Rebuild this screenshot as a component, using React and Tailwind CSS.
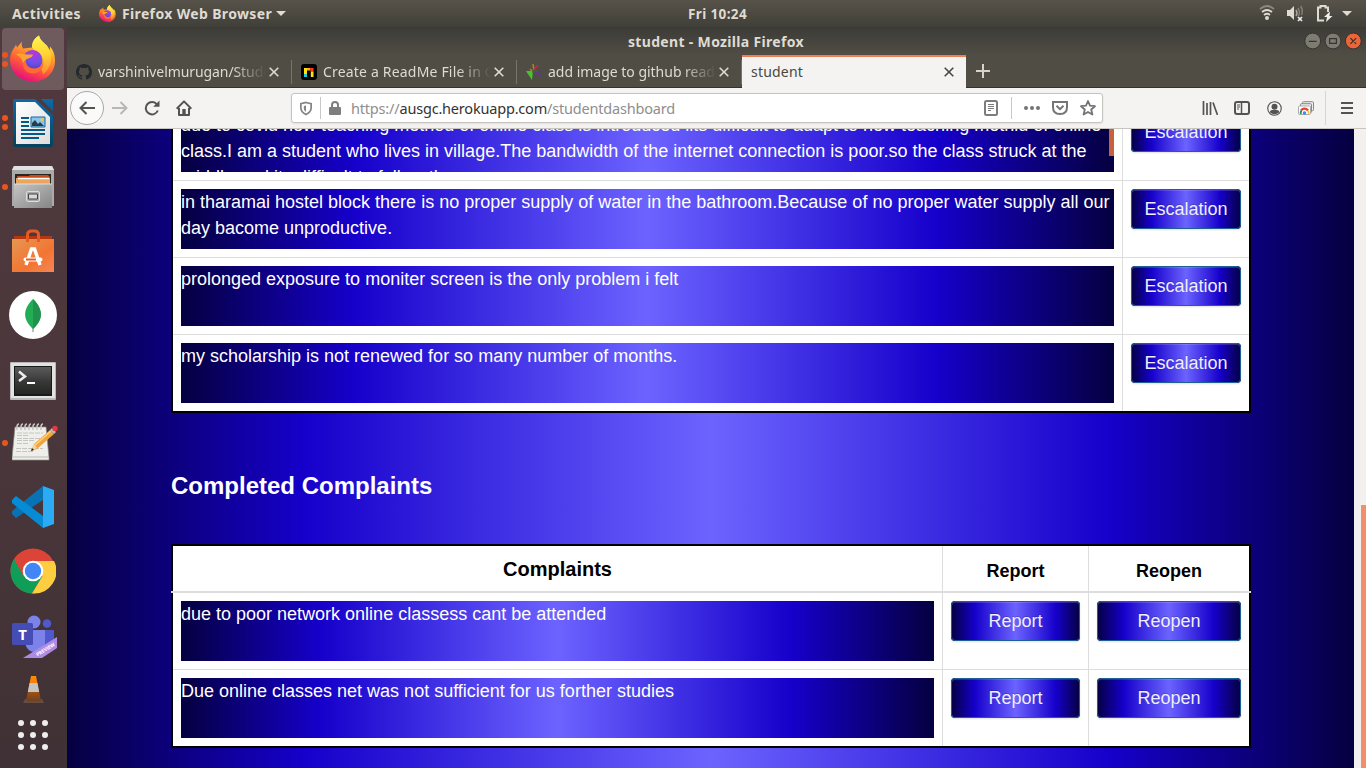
import React from "react";

const GRAD = "bg-[linear-gradient(90deg,#050040_0%,#1600cb_18.5%,#6c63ff_50%,#1600cb_81%,#050040_100%)]";
const UI = "font-['Noto_Sans','Open_Sans',sans-serif]";

/* One line of interface text fitted to a fixed advance width. */
function Label({ text, width, size = 14, bold = false, className = "", children }) {
  const ref = React.useRef(null);
  const [gap, setGap] = React.useState(0);
  React.useLayoutEffect(() => {
    const w = ref.current.getBoundingClientRect().width;
    const n = ref.current.textContent.length;
    setGap((width - w) / n);
  }, [width]);
  return (
    <span
      ref={ref}
      className={`inline-block whitespace-nowrap ${UI} ${bold ? "font-bold" : ""} ${className}`}
      style={{ fontSize: size, letterSpacing: gap }}
    >
      {children || text}
    </span>
  );
}

function FirefoxIcon({ className, id }) {
  return (
    <svg viewBox="0 0 46 46" className={className}>
      <defs>
        <linearGradient id={id + "a"} x1="0.8" y1="0.1" x2="0.4" y2="1">
          <stop offset="0" stopColor="#fff44f" /><stop offset="0.3" stopColor="#ffa62b" />
          <stop offset="0.65" stopColor="#ff5a3a" /><stop offset="1" stopColor="#e80f7c" />
        </linearGradient>
        <radialGradient id={id + "b"} cx="0.6" cy="0.15" r="0.9">
          <stop offset="0" stopColor="#b834e0" /><stop offset="0.55" stopColor="#7050e8" /><stop offset="1" stopColor="#4a3dbd" />
        </radialGradient>
        <linearGradient id={id + "c"} x1="0.5" y1="0" x2="0.6" y2="1">
          <stop offset="0" stopColor="#fff44f" /><stop offset="0.5" stopColor="#ffd433" /><stop offset="1" stopColor="#ff8a33" />
        </linearGradient>
      </defs>
      <path d="M29 0c1 5 5 7 8 10l3 5 0-4c4 5 5 9 5 14 0 13-10 21-22 21S0 37 0 24c0-5 2-9 5-13l1-2 1 3 5-6c-1 3 0 5 1 7l9-1c0-5 2-9 7-12z" fill={`url(#${id}a)`} />
      <path d="M29 0c1 5 5 7 9 12 6 9 3 21-5 27l-6-22-5-5c0-5 2-9 7-12z" fill={`url(#${id}c)`} />
      <circle cx="22.500" cy="24.500" r="10" fill={`url(#${id}b)`} />
      <path d="M6 19c4-2 8 0 11 0h6c-1 4-4 3-7 5l-3 4c-1-5-3-7-7-9z" fill="#ffa22c" />
      <path d="M13 28l3-4c-1 5 3 9 8 9 6 0 9-4 9-9 2 7-3 14-10 14-6 0-10-4-10-10z" fill="#ff6a33" />
    </svg>
  );
}

function DockItem({ dots = 0, height, active, children }) {
  return (
    <div className="flex w-[67px] shrink-0 items-center" style={{ height }}>
      <div className="z-10 -mr-[3px] flex w-[2px] shrink-0 flex-col items-center justify-center gap-[3px] pl-[5px]">
        {Array.from({ length: dots }, (_, i) => <span key={i} className="size-[6px] shrink-0 rounded-full bg-[#e95420]" />)}
      </div>
      <div className={`flex h-full w-[62px] items-center justify-center rounded-[4px] ${active ? "bg-[#6f5b5e]" : ""}`}>{children}</div>
    </div>
  );
}

function Dock() {
  return (
    <nav className="flex w-[67px] shrink-0 flex-col bg-[linear-gradient(180deg,#50393e_0%,#4b373b_50%,#3f3135_100%)] pt-[1px]">
      <DockItem dots={2} height={62} active><FirefoxIcon id="dock" className="mb-[2px] h-[47px] w-[46px]" /></DockItem>
      <DockItem dots={2} height={65}>
        <svg viewBox="0 0 40 48" className="h-12 w-10">
          <defs><linearGradient id="lw" x2="0" y2="1"><stop stopColor="#0d6aa8" /><stop offset="1" stopColor="#04425f" /></linearGradient><linearGradient id="paper" x2="1" y2="1"><stop stopColor="#fff" /><stop offset="1" stopColor="#ddd" /></linearGradient></defs>
          <path d="M2 0h20l18 16v30q0 2-2 2H2q-2 0-2-2V2q0-2 2-2zM28 0h12v12z" fill="url(#lw)" />
          <path d="M3 3h19l15 15v27H3z" fill="url(#paper)" />
          <path d="M8 19h8M8 23h8M8 27h8M8 31h24M8 35h24M8 39h18" stroke="#075985" strokeWidth="2" />
          <path d="M18 18h14v10H18z" fill="#8bc5ee" stroke="#12699e" /><circle cx="29" cy="20.500" r="1.500" fill="#fac443" /><path d="M19 27v-3l3-3 3 4 2-2 4 4z" fill="#263d45" />
        </svg>
      </DockItem>
      <DockItem dots={1} height={64}>
        <svg viewBox="0 0 42 44" className="h-11 w-[42px]">
          <defs><linearGradient id="cab" x2="1" y2="1"><stop stopColor="#c5c5c5" /><stop offset="1" stopColor="#858585" /></linearGradient></defs>
          <path d="M2 1h38l2 4v36H0V5z" fill="#aaa" /><path d="M2 1h38l2 4H0z" fill="#e1e1e1" />
          <path d="M3 9h36v12H3z" fill="#292522" /><path d="M5 11h12l1-1h18l2 2v8H5z" fill="#c84b18" /><path d="M4 13h34v6H4z" fill="#eca55d" /><path d="M6 13.500h31" stroke="#fff" strokeWidth="1.500" />
          <path d="M2 19h38v24H2z" fill="url(#cab)" /><path d="M2 19h38" stroke="#ddd" />
          <rect x="14.500" y="26.500" width="13" height="10" rx="1.500" fill="#aaa" stroke="#ddd" /><path d="M16.500 29h9v5h-9z" fill="#d8d8d8" stroke="#444" />
        </svg>
      </DockItem>
      <DockItem height={64}>
        <svg viewBox="0 0 42 44" className="h-11 w-[42px]">
          <defs><linearGradient id="bag" x2="1" y2="1"><stop stopColor="#e69752" /><stop offset=".6" stopColor="#f27532" /><stop offset="1" stopColor="#f58656" /></linearGradient></defs>
          <path d="M2 7h38v5H2z" fill="#b5370f" /><path d="M0 10h42v33H0z" fill="url(#bag)" />
          <path d="M15.500 13V6q0-4 4-4h3q4 0 4 4v7" fill="none" stroke="#e45b24" strokeWidth="3" />
          <path d="M14 36l5.500-16h3L28 36" fill="none" stroke="#fff" strokeWidth="3.500" /><path d="M13.500 30.500h15" stroke="#fff" strokeWidth="4" strokeLinecap="round" /><path d="M14 30.500h10" stroke="#f15a22" strokeWidth="2" />
        </svg>
      </DockItem>
      <DockItem height={64}>
        <svg viewBox="0 0 48 48" className="size-12"><circle cx="24" cy="24" r="24" fill="#fff" /><path d="M24 36v5" stroke="#999" strokeWidth="1.300" /><path d="M24 8c11 11 10 21 0 30-10-9-11-19 0-30z" fill="#20ad56" /><path d="M24 8c11 11 10 21 0 30z" fill="#22914e" /></svg>
      </DockItem>
      <DockItem height={67}>
        <svg viewBox="0 0 46 38" className="h-[38px] w-[46px]">
          <defs><linearGradient id="term" x2="0" y2="1"><stop stopColor="#5a5a5a" /><stop offset=".55" stopColor="#363836" /><stop offset="1" stopColor="#242624" /></linearGradient></defs>
          <rect width="46" height="38" rx="1" fill="#b8b8b8" /><path d="M1 1h44v35H1z" fill="#e2e2e2" /><path d="M4 4h38v30H4z" fill="#171a19" /><path d="M5 5h36v27H5z" fill="url(#term)" />
          <path d="M9 9.500l6 5-6 4.500" stroke="#eee" strokeWidth="2.500" fill="none" /><path d="M17 21h8" stroke="#fff" strokeWidth="2" />
        </svg>
      </DockItem>
      <DockItem dots={1} height={57}>
        <svg viewBox="0 0 46 38" className="mb-[2px] ml-[3px] h-[38px] w-[46px]">
          <path d="M3 4h31l3 31v2H0v-2z" fill="#eeeeeb" stroke="#8f8f88" strokeWidth=".7" /><path d="M1 34h35" stroke="#b9bbaf" />
          <path d="M5 7V4q0-3 2-3M9 7V4q0-3 2-3M13 7V4q0-3 2-3M17 7V4q0-3 2-3M21 7V4q0-3 2-3M25 7V4q0-3 2-3M29 7V4q0-3 2-3" stroke="#c5c5c5" strokeWidth="1.500" fill="none" />
          <path d="M5 10h26M5 12.500h12M5 15.500h23M5 17.500h17M5 20.500h11M4 25.500h27M4 28.500h17" stroke="#c0c0bc" strokeWidth=".9" strokeDasharray="5 1" />
          <path d="M19 28l3-7L38 7l4 4-17 15z" fill="#f2a43c" /><path d="M22 23L39 8" stroke="#ffd27c" strokeWidth="1.500" /><path d="M19 28l3-7 3 4z" fill="#efd3a4" /><path d="M19 28l1-3 2 2z" fill="#222" /><path d="M38 7l2-2 4 4-2 2z" fill="#bbb" /><circle cx="43" cy="5.500" r="2.700" fill="#e3393e" />
        </svg>
      </DockItem>
      <DockItem height={72}>
        <svg viewBox="0 0 42 42" className="mb-[1px] size-[42px]"><path d="M31 0v14L4 32l-4-4v-3z" fill="#0872b5" /><path d="M0 14l4-4 27 20v12L0 17z" fill="#078bd5" /><path d="M31 0l11 4v34l-11 4z" fill="#2caaf4" /></svg>
      </DockItem>
      <DockItem height={57}>
        <svg viewBox="0 0 46 46" className="mb-[1px] size-[46px]">
          <circle cx="23" cy="23" r="22.500" fill="#db4437" /><path d="M4 11a22.500 22.500 0 0 0 18 34.500L32.500 28 13.500 28z" fill="#0f9d58" /><path d="M23 13h21a22.500 22.500 0 0 1-22 32.500L32.500 28z" fill="#ffcd40" /><circle cx="23" cy="23" r="10.300" fill="#fff" /><circle cx="23" cy="23" r="8.200" fill="#4285f4" />
        </svg>
      </DockItem>
      <DockItem height={74}>
        <svg viewBox="0 0 46 44" className="ml-[2px] h-11 w-[46px]">
          <circle cx="23" cy="7" r="6.500" fill="#7b83eb" /><circle cx="36" cy="8.500" r="4.300" fill="#5059c9" /><path d="M31 15h12v13q-3 6-8 6z" fill="#5059c9" /><path d="M15 15h19v14q-2 8-10 8T14 28z" fill="#7b83eb" />
          <rect x="1" y="8" width="21" height="22" rx="1.500" fill="#454db5" /><text x="11.500" y="24.500" textAnchor="middle" fontSize="15" fontWeight="700" fill="#fff" fontFamily="Open Sans, sans-serif">T</text>
          <path d="M12 43l34-21v11L31 43z" fill="#ad8be5" /><text transform="translate(26.500 41.500) rotate(-32)" fontSize="5" fontWeight="700" fill="#fff" fontFamily="Open Sans, sans-serif" textLength="21">PREVIEW</text>
        </svg>
      </DockItem>
      <DockItem height={31}>
        <svg viewBox="0 0 21 28" className="h-7 w-[21px]"><defs><linearGradient id="cone" x2="0" y2="1"><stop stopColor="#ff8a00" /><stop offset=".4" stopColor="#f07a10" /><stop offset=".6" stopColor="#a55312" /><stop offset="1" stopColor="#6e4020" /></linearGradient></defs><path d="M2 23h17l2 4H0z" fill="#664d43" /><path d="M8 0h5l5 25H3z" fill="url(#cone)" /><path d="M6.600 7h7.800l1.800 9H4.800z" fill="#c4c4c2" /></svg>
      </DockItem>
      <DockItem height={60}>
        <svg viewBox="0 0 30 30" className="size-[30px]" fill="#eee">{[3, 15, 27].map((y) => [3, 15, 27].map((x) => <circle key={x + "-" + y} cx={x} cy={y} r="3" />))}</svg>
      </DockItem>
    </nav>
  );
}

function Close({ className = "" }) {
  return <svg viewBox="0 0 10 10" className={`size-[10px] shrink-0 ${className}`} fill="none" stroke="currentColor" strokeWidth="1.600"><path d="M.7.7l8.600 8.600M9.300.7L.7 9.300" /></svg>;
}

function Tab({ icon, text, width, left }) {
  return (
    <div className="flex h-[33px] w-[225px] shrink-0 items-center pl-[9px] text-[#dedbd2]">
      {icon}
      <div className="flex w-[168px] items-center overflow-hidden [mask-image:linear-gradient(90deg,#000_80%,transparent_100%)]" style={{ marginLeft: left }}>
        <Label text={text} width={width} />
      </div>
      <Close className="ml-auto mr-[12px]" />
      <span className="h-6 w-px bg-[#77746c]" />
    </div>
  );
}

function TopBar() {
  return (
    <header className="flex h-[27px] items-center bg-[linear-gradient(180deg,#57534a,#403f39)] pl-3 text-[#dfdbd2]">
      <div className="flex w-[652px] items-center">
        <Label text="Activities" width={69} bold size={14} />
        <FirefoxIcon id="menu" className="ml-[18px] h-[17px] w-[17px]" />
        <Label text="Firefox Web Browser" width={150} bold size={14} className="ml-[6px]" />
        <span className="ml-[4px] border-x-[5px] border-t-[5px] border-x-transparent border-t-current" />
      </div>
      <div className="w-[132px] pb-[2px] pl-6"><Label text="Fri 10:24" width={59} bold size={13.5} /></div>
      <svg viewBox="0 0 96 20" className="mb-[2px] ml-auto mr-[11px] h-5 w-24" fill="none">
        <path d="M1 6q7-6 14 0" stroke="#8b8880" strokeWidth="1.700" /><path d="M3 9q5-4 10 0M5 12q3-2.500 6 0" stroke="#dedbd2" strokeWidth="1.700" /><circle cx="8" cy="15" r="2" fill="#dedbd2" />
        <path d="M28 7h3l4-4v14l-4-4h-3z" fill="#dedbd2" /><path d="M37 7q2 3 0 6" stroke="#aaa79f" strokeWidth="1.500" /><path d="M39 5q3 5 0 8M41.500 3q3 4 1 9" stroke="#817e76" strokeWidth="1.500" /><path d="M39 14l4 4m0-4l-4 4" stroke="#eee" strokeWidth="1.700" />
        <path d="M65 17.500h-6V4.500h2.500V3h5v1.500H69V9" stroke="#dedbd2" strokeWidth="2" /><path d="M71 8.500l-6 5.500h3l-1 5 6.500-6h-3z" fill="#eee" /><path d="M83 8h10l-5 5z" fill="#dedbd2" />
      </svg>
    </header>
  );
}

function WindowTop() {
  return (
    <>
      <div className="flex h-7 items-center bg-[linear-gradient(180deg,#3c3b36,#504d45)] text-[#dfdbd2]">
        <div className="flex flex-1 justify-center"><Label text="student - Mozilla Firefox" width={176} bold size={14} className="ml-[61px]" /></div>
        <svg viewBox="0 0 60 18" className="mr-[4px] h-[18px] w-[58px]" fill="none">
          <circle cx="9" cy="9" r="8.200" fill="#7e7b73" stroke="#34332f" /><circle cx="30" cy="9" r="8.200" fill="#7e7b73" stroke="#34332f" /><circle cx="51" cy="9" r="8.200" fill="#ec6438" stroke="#34332f" />
          <path d="M5 9.500h8M26.500 6.500h7v5h-7zM48 6l6 6m0-6l-6 6" stroke="#35342f" strokeWidth="1.300" />
        </svg>
      </div>
      <div className="flex h-[33px] items-center bg-[#504d45] shadow-[inset_0_-1px_#33322e]">
        <Tab text="varshinivelmurugan/Stude" width={173} left={6} icon={<svg viewBox="0 0 16 16" className="size-4 shrink-0" fill="#24292e"><path d="M8 0C3.580 0 0 3.580 0 8c0 3.540 2.290 6.530 5.470 7.590.4.070.55-.17.55-.38v-1.490c-2.010.37-2.530-.49-2.690-.94-.09-.23-.48-.94-.82-1.130-.28-.15-.68-.52-.01-.53.63-.01 1.080.58 1.230.82.72 1.210 1.870.87 2.330.66.070-.52.28-.87.51-1.070-1.780-.2-3.640-.89-3.640-3.950 0-.87.31-1.590.82-2.150-.08-.2-.36-1.020.08-2.120 0 0 .67-.21 2.200.82a7.600 7.600 0 0 1 4 0c1.530-1.040 2.200-.82 2.200-.82.44 1.100.16 1.920.08 2.120.51.56.82 1.270.82 2.150 0 3.070-1.870 3.750-3.650 3.950.29.25.54.73.54 1.480v2.200c0 .21.15.46.55.38A8 8 0 0 0 16 8c0-4.420-3.580-8-8-8z" /></svg>} />
        <Tab text="Create a ReadMe File in Gi" width={176} left={6} icon={<svg viewBox="0 0 16 16" className="size-4 shrink-0"><rect width="16" height="16" rx="3" fill="#000" /><path d="M3 4h3v6H3z" fill="#ffe112" /><path d="M3 10h3v3H3z" fill="#18c9df" /><path d="M6 4h3v2.500H6z" fill="#ffae1a" /><path d="M9 4h3.500v3.500H9.500z" fill="#ff3c1e" /><path d="M9.800 7.500h2.700V13H9.800z" fill="#ffe500" /></svg>} />
        <Tab text="add image to github readm" width={180} left={6} icon={<svg viewBox="0 0 16 16" className="size-4 shrink-0"><path d="M0 7l7 0-1 9z" fill="#43c52e" /><path d="M7 0l1 6M7 8L4 5" stroke="#a08a20" strokeWidth="1.600" /><path d="M8 6l4-5" stroke="#c32649" strokeWidth="2" /><path d="M10 8.500l6 3" stroke="#653393" strokeWidth="2.200" /><path d="M6 8l6-1" stroke="#356a36" strokeWidth="1.400" /></svg>} />
        <div className="flex h-full w-[224px] items-center border-t-2 border-[#ee7e55] bg-[#f4f3f1] pb-[2px] pl-[9px] text-[#484842]"><Label text="student" width={52} /><Close className="ml-auto mr-[12px]" /></div>
        <svg viewBox="0 0 14 14" className="mb-[2px] ml-[10px] size-[14px]" stroke="#d7d3c9" strokeWidth="2"><path d="M7 0v14M0 7h14" /></svg>
      </div>
    </>
  );
}

function Toolbar() {
  return (
    <div className="flex h-[41px] items-center border-b border-[#c8c5c1] bg-[#f4f3f1]">
      <div className="ml-[3px] flex size-[34px] items-center justify-center rounded-full border border-[#aaa8a4] bg-[#fbfafa]"><svg viewBox="0 0 16 14" className="h-[14px] w-4" fill="none" stroke="#55534f" strokeWidth="2"><path d="M16 7H1M7.500 1l-6 6 6 6" /></svg></div>
      <svg viewBox="0 0 16 14" className="ml-[8px] h-[14px] w-4" fill="none" stroke="#b9b7b4" strokeWidth="2"><path d="M0 7h15M8.500 1l6 6-6 6" /></svg>
      <svg viewBox="0 0 16 16" className="ml-[16px] size-4" fill="none" stroke="#55534f" strokeWidth="2"><path d="M13 4.500A6.200 6.200 0 1 0 13.800 10.500" /><path d="M15.500 .5v6.300H9.200z" fill="#55534f" stroke="none" /></svg>
      <svg viewBox="0 0 16 16" className="ml-[16px] size-4" fill="none" stroke="#55534f" strokeWidth="2"><path d="M.7 8.700L8 1.400l7.300 7.300M3 8v7h10V8" strokeLinejoin="round" /><path d="M6.300 9h3.400v5H6.300z" fill="#55534f" stroke="none" /></svg>
      <div className="ml-[99px] flex h-[30px] w-[812px] items-center rounded-[3px] border border-[#c6c3bf] bg-white shadow-[0_1px_2px_rgba(0,0,0,0.08)]">
        <svg viewBox="0 0 14 16" className="ml-[8px] h-[15px] w-[12px]" fill="none" stroke="#848484" strokeWidth="2"><path d="M7 1l6 1.500V7c0 4-3 6.500-6 8-3-1.500-6-4-6-8V2.500z" /><path d="M7 4.500L4.500 5v3c0 2 1.200 3 2.500 3.800z" fill="#848484" stroke="none" /></svg>
        <span className="ml-[8px] h-[22px] w-px bg-[#c9c7c4]" />
        <svg viewBox="0 0 12 14" className="ml-[8px] h-[14px] w-3"><path d="M3 7V4a3 3 0 0 1 6 0v3" fill="none" stroke="#7e7e7e" strokeWidth="2" /><rect y="6" width="12" height="8" rx="1" fill="#7e7e7e" /></svg>
        <Label width={324} size={14.5} className="ml-[10px] mt-[2px] text-[#8e8e8e]"><span>https://</span><span className="text-[#333]">ausgc.herokuapp.com</span><span>/studentdashboard</span></Label>
        <svg viewBox="0 0 14 16" className="ml-auto h-4 w-[14px]" fill="none" stroke="#7d7d7d"><rect x="1" y="1" width="12" height="14" rx="1.500" strokeWidth="2" /><path d="M4 4.500h6M4 6.500h6M4 8.500h6M4 10.500h3" /></svg>
        <span className="ml-[13px] h-[22px] w-px bg-[#c9c7c4]" />
        <svg viewBox="0 0 16 4" className="ml-[12px] h-1 w-4" fill="#747474"><circle cx="2" cy="2" r="2" /><circle cx="8" cy="2" r="2" /><circle cx="14" cy="2" r="2" /></svg>
        <svg viewBox="0 0 16 14" className="ml-[12px] h-[14px] w-4" fill="none" stroke="#747474" strokeWidth="2"><path d="M1 1h14v5q0 7-7 7T1 6z" /><path d="M4.500 4.800L8 8.200l3.500-3.400" /></svg>
        <svg viewBox="0 0 16 16" className="ml-[12px] mr-[6px] size-4" fill="none" stroke="#747474" strokeWidth="1.800" strokeLinejoin="round"><path d="M8 1l2 4.700 5 .5-3.800 3.300 1.200 5L8 11.900l-4.400 2.600 1.200-5L1 6.200l5-.5z" /></svg>
      </div>
      <svg viewBox="0 0 16 14" className="ml-[99px] h-[14px] w-4" stroke="#55534f" strokeWidth="1.700" fill="none"><path d="M1.500 0v14M5 2v12M8.500 1v13M11 1.500L15.500 14" /></svg>
      <svg viewBox="0 0 16 14" className="ml-[16px] h-[14px] w-4" stroke="#55534f" fill="none"><rect x="1" y="1" width="14" height="12" rx="2" strokeWidth="2" /><path d="M7.500 1v12" strokeWidth="1.500" /><path d="M3 4h3M3 6h3M3 8h2" /></svg>
      <svg viewBox="0 0 16 16" className="ml-[17px] size-[15px]" fill="none"><circle cx="8" cy="8" r="7.200" stroke="#55534f" strokeWidth="1.200" /><circle cx="8" cy="6" r="3.200" fill="#55534f" /><path d="M3 12q0-2.500 3-2.500h4q3 0 3 2.500-5 4-10 0z" fill="#55534f" /></svg>
      <svg viewBox="0 0 16 14" className="ml-[16px] h-[14px] w-4" fill="none"><rect x="4.500" y=".7" width="11" height="9" rx="1" fill="#eee" stroke="#85878b" /><rect x="2.500" y="2.700" width="11" height="9" rx="1" fill="#eee" stroke="#85878b" /><rect x=".5" y="5" width="12" height="8.500" rx="1" fill="#fff" stroke="#aaa" /><path d="M2.800 13a4 4 0 0 1 .7-3.500" stroke="#169b59" strokeWidth="2" /><path d="M3 9.500a4.300 4.300 0 0 1 7 0" stroke="#e44335" strokeWidth="2.200" /><path d="M10 9.500q.9 1.500.6 3.500" stroke="#ffc928" strokeWidth="1.800" /><circle cx="6.500" cy="12" r="1.800" fill="#438af4" /></svg>
      <span className="ml-[11px] h-[34px] w-px bg-[#d8d5d2]" />
      <svg viewBox="0 0 12 12" className="ml-[15px] size-3" stroke="#55534f" strokeWidth="2"><path d="M0 1h12M0 6h12M0 11h12" /></svg>
    </div>
  );
}

function Complaint({ text }) {
  return <div className={`h-[60px] overflow-hidden whitespace-pre text-[18px] leading-[26px] text-white ${GRAD}`}>{text}</div>;
}

function Action({ text }) {
  return (
    <div className={`rounded-[4px] ${GRAD}`}>
      <div className="h-10 rounded-[4px] border border-[#1e5f97] text-center text-[18px] leading-[38px] text-[#f0eeff] shadow-[inset_0_1px_0_rgba(255,255,255,0.15),0_1px_2px_rgba(0,0,0,0.12)] [text-shadow:0_-1px_0_rgba(0,0,0,0.2)]">{text}</div>
    </div>
  );
}

function Row({ text, actions, columns, last }) {
  return (
    <div className={`grid ${columns} ${last ? "h-[76px]" : "h-[77px] border-b border-[#ddd]"}`}>
      <div className="p-2"><Complaint text={text} /></div>
      {actions.map((a) => <div key={a} className="border-l border-[#ddd] p-2"><Action text={a} /></div>)}
    </div>
  );
}

const ACTIVE = "grid-cols-[949px_127px]";
const DONE = "grid-cols-[769px_146px_161px]";

function Page() {
  return (
    <main className="flex h-[639px] overflow-hidden bg-[#f2f1f0] font-['Liberation_Sans',Arial,sans-serif]">
      <div className={`w-[1287px] shrink-0 overflow-hidden pl-[104px] ${GRAD}`}>
        <section className="-mt-[25px] w-[1080px] border-2 border-t-0 border-black bg-white">
          <div className={`grid h-[77px] border-b border-[#ddd] ${ACTIVE}`}>
            <div className="p-2">
              <div className={`flex h-[60px] overflow-hidden text-[18px] leading-[26px] text-white ${GRAD}`}>
                <p className="w-[928px] whitespace-pre">
                  {"due to covid new teaching method of online class is introduced iits difficult to adapt to new teaching methid of online\nclass.I am a student who lives in village.The bandwidth of the internet connection is poor.so the class struck at the\nmiddle and its difficult to follow the"}
                </p>
                <span className="mt-1 h-10 w-[5px] bg-[#c5613f]" />
              </div>
            </div>
            <div className="border-l border-[#ddd] p-2"><Action text="Escalation" /></div>
          </div>
          <Row columns={ACTIVE} actions={["Escalation"]} text={"in tharamai hostel block there is no proper supply of water in the bathroom.Because of no proper water supply all our\nday bacome unproductive."} />
          <Row columns={ACTIVE} actions={["Escalation"]} text="prolonged exposure to moniter screen is the only problem i felt" />
          <Row columns={ACTIVE} actions={["Escalation"]} text="my scholarship is not renewed for so many number of months." last />
        </section>
        <h2 className="mt-[57px] h-8 text-[24px] font-bold leading-8 text-white">Completed Complaints</h2>
        <section className="mt-[42px] w-[1080px] border-2 border-black bg-white">
          <div className={`-mx-[2px] grid h-[47px] border-b-2 border-[#ddd] px-[2px] text-center font-bold text-black ${DONE}`}>
            <div className="pt-px text-[20px] leading-[45px]">Complaints</div>
            <div className="border-l border-[#ddd] pt-[3px] text-[18px] leading-[45px]">Report</div>
            <div className="border-l border-[#ddd] pt-[3px] text-[18px] leading-[45px]">Reopen</div>
          </div>
          <Row columns={DONE} actions={["Report", "Reopen"]} text="due to poor network online classess cant be attended" />
          <Row columns={DONE} actions={["Report", "Reopen"]} text="Due online classes net was not sufficient for us forther studies" last />
        </section>
      </div>
      <div className="flex flex-1 items-end justify-end"><span className="h-[263px] w-[5px] bg-[#f28e6c]" /></div>
    </main>
  );
}

export default function App() {
  return (
    <div className="flex h-[768px] w-[1366px] flex-col overflow-hidden">
      <TopBar />
      <div className="flex h-[741px]">
        <Dock />
        <div className="flex w-[1299px] flex-col"><WindowTop /><Toolbar /><Page /></div>
      </div>
    </div>
  );
}
